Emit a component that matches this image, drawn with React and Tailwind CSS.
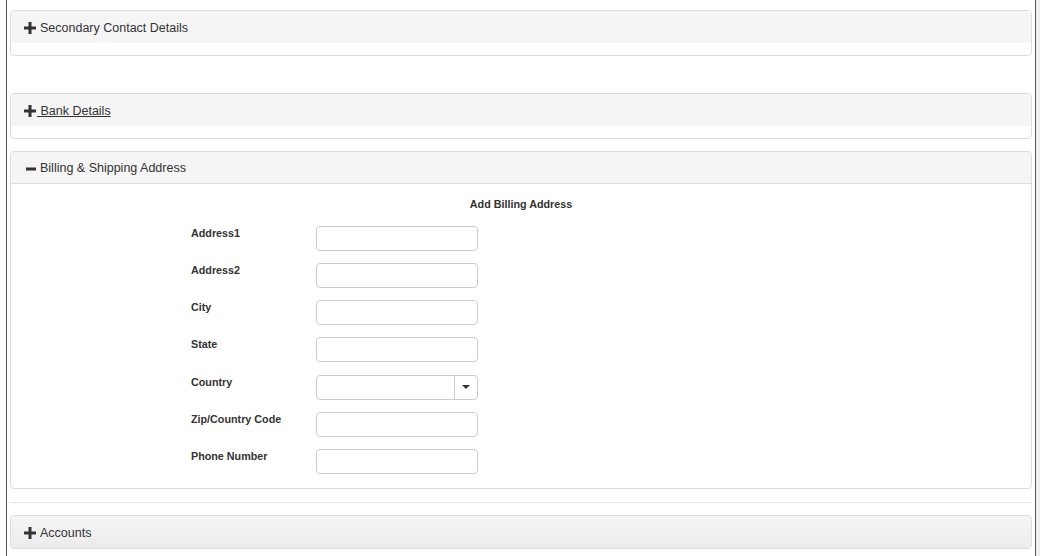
import React from "react";

const font = { fontFamily: '"Liberation Sans", Arial, sans-serif' };

function PlusIcon() {
  return (
    <svg width="12" height="12" viewBox="0 0 12 12" className="shrink-0">
      <rect x="4.5" y="0" width="3" height="12" fill="#333" />
      <rect x="0" y="4.5" width="12" height="3" fill="#333" />
    </svg>
  );
}

function MinusIcon() {
  return (
    <svg width="12" height="12" viewBox="0 0 12 12" className="shrink-0">
      <rect x="2" y="4.5" width="10" height="3" fill="#333" />
    </svg>
  );
}

function PanelHeader({ open, children, gradient }) {
  return (
    <div
      className={
        "h-[32px] flex items-center gap-[4px] pl-[13px] pt-[2px] text-[12.5px] text-[#333] " +
        (gradient ? "bg-gradient-to-b from-[#f5f5f5] to-[#ebebeb]" : "bg-[#f5f5f5]") +
        (open ? " border-b border-[#ddd]" : "")
      }
    >
      {open ? <MinusIcon /> : <PlusIcon />}
      {children}
    </div>
  );
}

const fields = [
  "Address1",
  "Address2",
  "City",
  "State",
  "Country",
  "Zip/Country Code",
  "Phone Number",
];

function Field({ label, last }) {
  return (
    <div className={"flex items-start " + (last ? "" : "mb-[12.17px]")}>
      <div className="w-[125px] leading-[12px] pt-[1px] text-[10.75px] font-bold text-[#333]">
        {label}
      </div>
      {label === "Country" ? (
        <div className="w-[162px] h-[25px] border border-[#ccc] rounded-[4px] flex bg-white">
          <div className="flex-1" />
          <div className="w-[23px] border-l border-[#ccc] flex items-center justify-center">
            <svg width="8" height="4" viewBox="0 0 8 4">
              <path d="M0 0 L8 0 L4 4 Z" fill="#333" />
            </svg>
          </div>
        </div>
      ) : (
        <input
          type="text"
          className="w-[162px] h-[25px] border border-[#ccc] rounded-[4px] bg-white outline-none"
        />
      )}
    </div>
  );
}

export default function App() {
  return (
    <div className="flex h-[556px] w-[1040px] overflow-hidden bg-white" style={font}>
      <div className="w-[6px] shrink-0" />
      <div className="w-[1030px] shrink-0 border-x border-[#555] px-[3px] pt-[10px]">
        {/* Secondary contact */}
        <div className="border border-[#ddd] rounded-[4px] overflow-hidden mb-[37px]">
          <PanelHeader>Secondary Contact Details</PanelHeader>
          <div className="h-[12px]" />
        </div>

        {/* Bank */}
        <div className="border border-[#ddd] rounded-[4px] overflow-hidden mb-[12px]">
          <PanelHeader>
            <a href="#" className="underline text-[#333] -ml-[3px]">
              {"\u00a0Bank Details"}
            </a>
          </PanelHeader>
          <div className="h-[12px]" />
        </div>

        {/* Billing */}
        <div className="border border-[#ddd] rounded-[4px] overflow-hidden">
          <PanelHeader open>Billing &amp; Shipping Address</PanelHeader>
          <div className="h-[304px] pt-[14px]">
            <div className="text-center text-[10.75px] leading-[12px] font-bold text-[#333]">
              Add Billing Address
            </div>
            <div className="pl-[180px] pt-[16px]">
              {fields.map((f, i) => (
                <Field key={f} label={f} last={i === fields.length - 1} />
              ))}
            </div>
          </div>
        </div>

        <div className="mt-[13px] mb-[12px] h-px bg-[#e6e6e6]" />

        {/* Accounts */}
        <div className="border border-[#ddd] rounded-[4px] overflow-hidden">
          <PanelHeader gradient>Accounts</PanelHeader>
        </div>
      </div>
      <div className="flex-1 bg-[#eeeeee]" />
    </div>
  );
}
